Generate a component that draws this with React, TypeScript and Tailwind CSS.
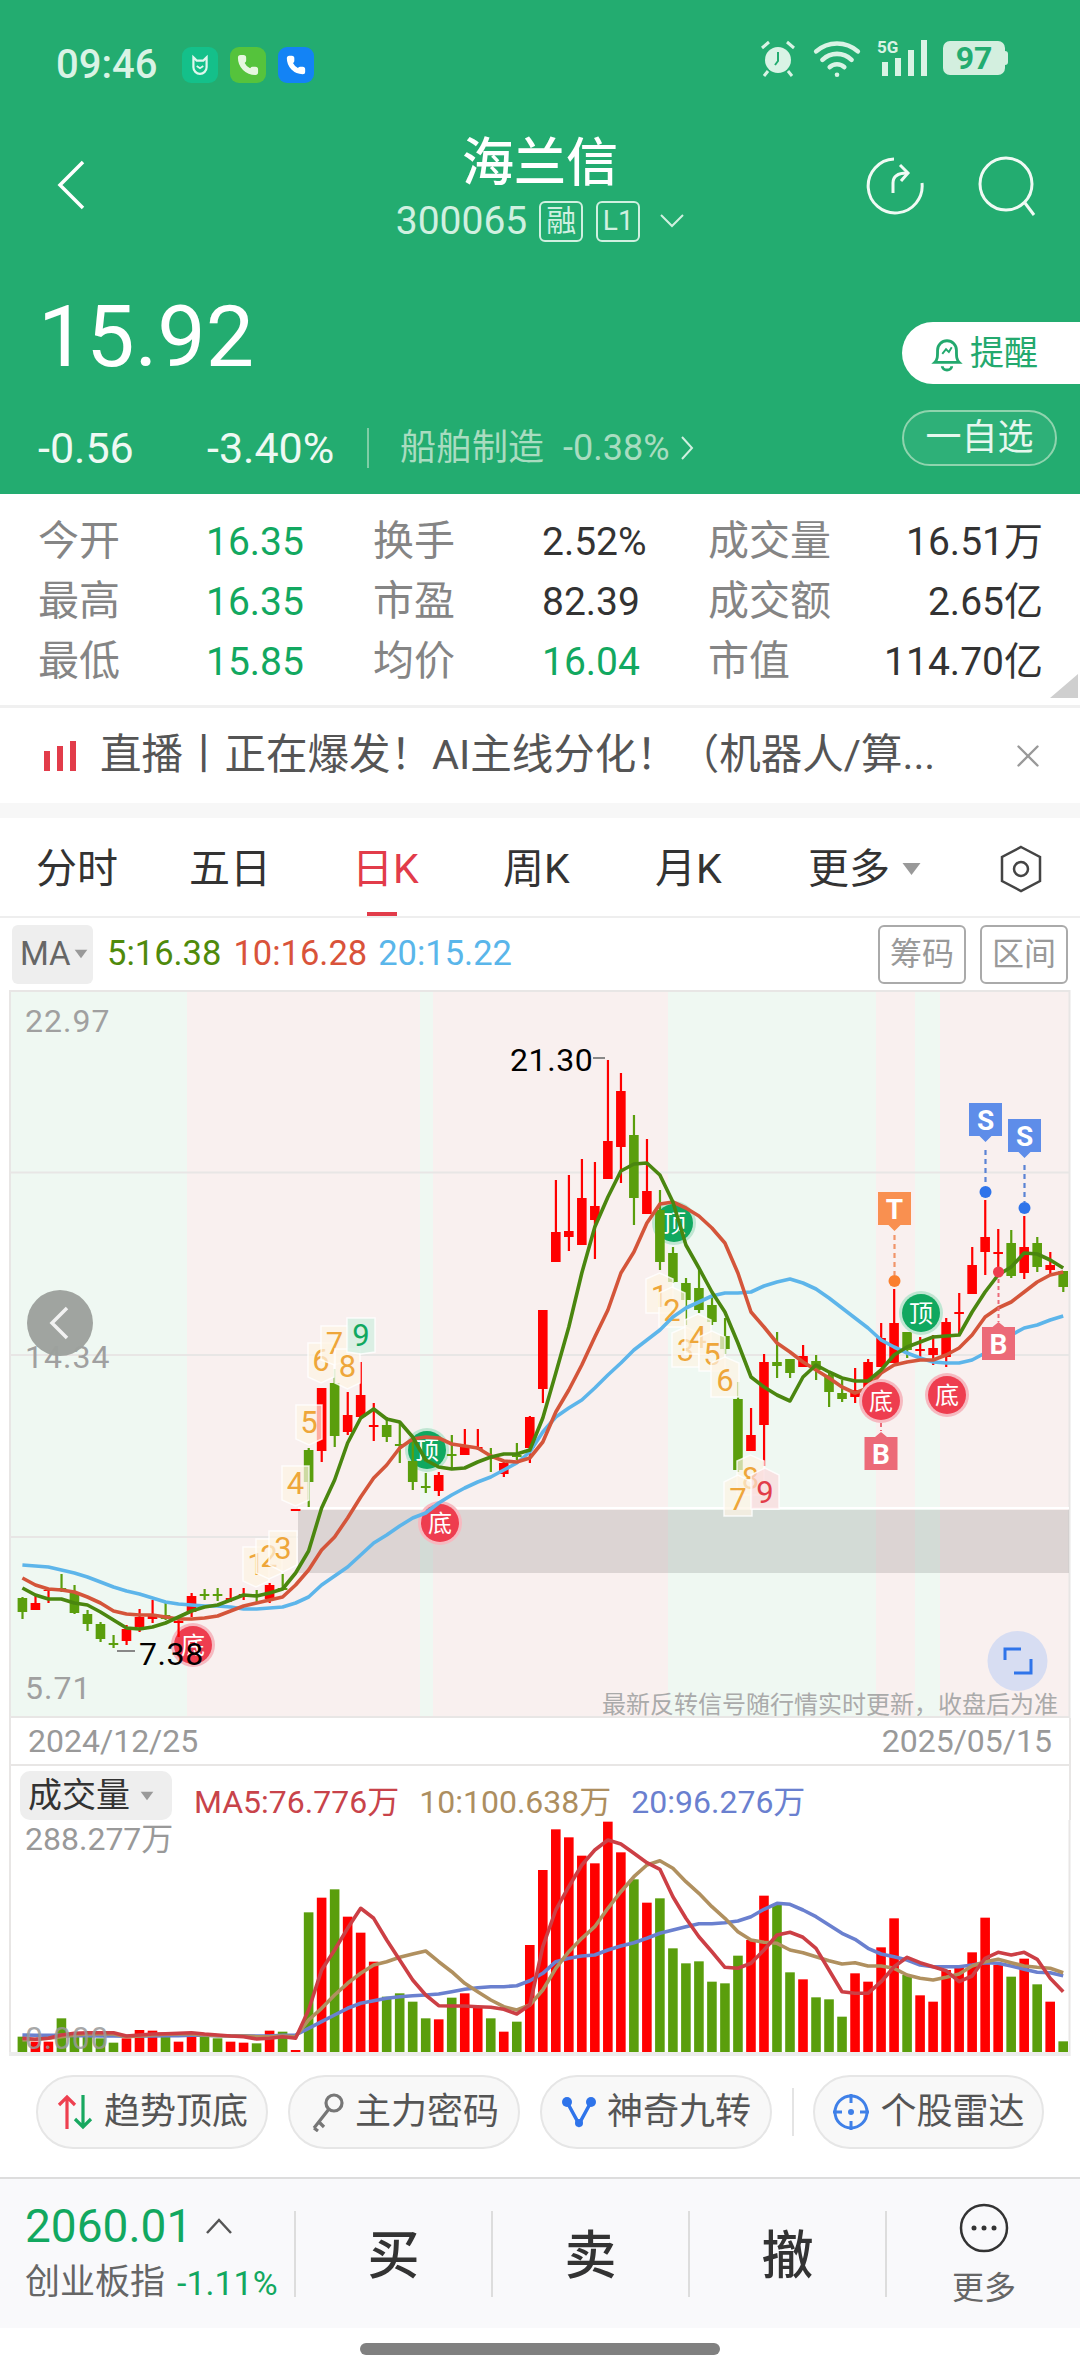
import React from 'react';
import { Phone, Wifi, X } from 'lucide-react';

const FONT = 'font-["Roboto","Noto_Sans_CJK_SC",sans-serif]';

// bar position shared by price and volume charts
const barX = (i: number) => 22.4 + 13.01 * i;

type Candle = [number, number, number, number, 'r' | 'g'];

const candles: Candle[] = [
  [1598, 1612, 1597, 1619, 'g'], [1603, 1610, 1595, 1610, 'r'], [1590, 1591, 1590, 1603, 'r'], [1588, 1590, 1574, 1592, 'g'],
  [1593, 1613, 1585, 1614, 'g'], [1614, 1624, 1610, 1631, 'g'], [1624, 1639, 1622, 1642, 'g'], [1643, 1645, 1635, 1648, 'g'],
  [1629, 1641, 1625, 1645, 'r'], [1617, 1627, 1609, 1632, 'r'], [1614, 1619, 1600, 1623, 'r'], [1615, 1619, 1603, 1620, 'g'],
  [1621, 1623, 1617, 1637, 'r'], [1596, 1612, 1593, 1617, 'r'], [1594, 1596, 1589, 1600, 'g'], [1594, 1596, 1588, 1601, 'g'],
  [1598, 1600, 1588, 1602, 'r'], [1594, 1596, 1588, 1600, 'r'], [1594, 1596, 1590, 1602, 'g'], [1585, 1599, 1583, 1603, 'r'],
  [1588, 1590, 1574, 1590, 'g'], [1509, 1511, 1509, 1511, 'r'], [1450, 1482, 1448, 1507, 'g'], [1388, 1451, 1388, 1462, 'r'],
  [1383, 1436, 1369, 1447, 'g'], [1415, 1432, 1392, 1435, 'r'], [1395, 1417, 1362, 1418, 'r'], [1425, 1427, 1403, 1441, 'r'],
  [1425, 1437, 1417, 1442, 'g'], [1444, 1446, 1422, 1463, 'g'], [1461, 1482, 1440, 1490, 'g'], [1486, 1488, 1473, 1493, 'g'],
  [1475, 1491, 1472, 1496, 'r'], [1454, 1456, 1435, 1468, 'g'], [1445, 1455, 1429, 1455, 'r'], [1447, 1449, 1429, 1450, 'r'],
  [1457, 1459, 1448, 1472, 'g'], [1463, 1474, 1462, 1477, 'r'], [1455, 1457, 1443, 1460, 'g'], [1417, 1448, 1416, 1463, 'r'],
  [1310, 1389, 1310, 1403, 'r'], [1232, 1262, 1180, 1262, 'r'], [1231, 1237, 1175, 1251, 'r'], [1198, 1245, 1159, 1245, 'r'],
  [1206, 1220, 1162, 1259, 'r'], [1141, 1179, 1060, 1179, 'r'], [1091, 1147, 1073, 1183, 'r'], [1135, 1198, 1115, 1225, 'g'],
  [1191, 1214, 1139, 1214, 'r'], [1210, 1262, 1190, 1270, 'g'], [1253, 1282, 1247, 1283, 'g'], [1283, 1300, 1278, 1325, 'g'],
  [1288, 1310, 1270, 1313, 'g'], [1305, 1322, 1297, 1325, 'g'], [1336, 1349, 1318, 1354, 'g'], [1399, 1470, 1382, 1472, 'g'],
  [1435, 1451, 1408, 1451, 'r'], [1362, 1425, 1354, 1466, 'r'], [1362, 1366, 1332, 1378, 'g'], [1359, 1373, 1359, 1378, 'g'],
  [1356, 1367, 1345, 1367, 'r'], [1361, 1370, 1355, 1380, 'g'], [1375, 1392, 1373, 1407, 'g'], [1393, 1399, 1380, 1402, 'g'],
  [1390, 1397, 1368, 1403, 'r'], [1362, 1395, 1359, 1395, 'r'], [1338, 1367, 1323, 1367, 'r'], [1323, 1363, 1289, 1363, 'r'],
  [1332, 1350, 1332, 1358, 'g'], [1349, 1351, 1337, 1357, 'r'], [1348, 1355, 1335, 1365, 'r'], [1322, 1357, 1318, 1367, 'r'],
  [1312, 1314, 1293, 1335, 'r'], [1265, 1294, 1247, 1294, 'r'], [1237, 1252, 1200, 1275, 'r'], [1252, 1254, 1229, 1272, 'r'],
  [1243, 1276, 1230, 1278, 'g'], [1247, 1273, 1216, 1279, 'r'], [1243, 1267, 1237, 1272, 'g'], [1265, 1270, 1252, 1275, 'r'],
  [1271, 1287, 1271, 1292, 'g'],
];

const ma5 = [1588, 1595, 1599, 1599, 1603, 1605, 1612, 1620, 1628, 1629, 1627, 1623, 1617, 1611, 1607, 1605, 1600, 1595, 1596, 1593, 1589, 1573, 1551, 1508, 1480, 1443, 1418, 1409, 1419, 1422, 1437, 1460, 1467, 1469, 1468, 1462, 1457, 1454, 1454, 1450, 1418, 1373, 1327, 1273, 1227, 1197, 1171, 1164, 1163, 1175, 1202, 1245, 1268, 1292, 1312, 1343, 1377, 1387, 1395, 1401, 1377, 1365, 1372, 1378, 1381, 1381, 1370, 1355, 1347, 1342, 1337, 1336, 1335, 1312, 1292, 1275, 1267, 1253, 1254, 1260, 1268];
const ma10 = [1578, 1585, 1589, 1590, 1592, 1597, 1603, 1611, 1614, 1615, 1615, 1617, 1619, 1619, 1618, 1616, 1611, 1606, 1603, 1600, 1597, 1585, 1570, 1550, 1537, 1518, 1497, 1478, 1465, 1448, 1439, 1437, 1438, 1444, 1446, 1448, 1456, 1461, 1462, 1458, 1442, 1412, 1390, 1365, 1337, 1310, 1273, 1252, 1223, 1204, 1202, 1208, 1216, 1228, 1243, 1273, 1312, 1327, 1343, 1352, 1362, 1370, 1378, 1387, 1393, 1388, 1373, 1365, 1362, 1360, 1360, 1355, 1348, 1335, 1317, 1308, 1302, 1292, 1282, 1275, 1272];
const ma20 = [1565, 1566, 1567, 1570, 1573, 1577, 1582, 1587, 1591, 1594, 1598, 1602, 1604, 1605, 1606, 1606, 1607, 1609, 1609, 1608, 1607, 1603, 1597, 1585, 1576, 1567, 1555, 1543, 1535, 1526, 1518, 1513, 1503, 1495, 1488, 1482, 1477, 1470, 1463, 1452, 1432, 1417, 1408, 1400, 1388, 1375, 1363, 1350, 1340, 1330, 1317, 1308, 1302, 1296, 1293, 1293, 1292, 1286, 1282, 1279, 1283, 1289, 1298, 1308, 1318, 1328, 1340, 1347, 1353, 1358, 1362, 1363, 1363, 1360, 1353, 1345, 1335, 1328, 1325, 1320, 1316];

// volume values are offsets below y=1720, in thirds of a pixel
const volTops = [950, 965, 965, 895, 945, 945, 955, 968, 955, 930, 932, 950, 965, 950, 950, 955, 965, 968, 970, 932, 935, 990, 577, 533, 508, 590, 638, 725, 830, 820, 845, 895, 898, 833, 820, 860, 895, 935, 905, 675, 450, 328, 352, 407, 430, 305, 397, 478, 548, 535, 685, 730, 724, 785, 790, 707, 660, 527, 555, 757, 778, 832, 838, 890, 760, 785, 682, 595, 765, 826, 845, 750, 735, 697, 593, 735, 770, 716, 793, 845, 964];
const volGreen = [0, 3, 4, 5, 6, 7, 11, 14, 15, 18, 20, 22, 24, 28, 29, 30, 31, 33, 36, 38, 47, 49, 50, 51, 52, 53, 54, 55, 58, 59, 61, 62, 63, 68, 76, 78, 80];
const volMa5 = [955, 958, 955, 945, 940, 938, 938, 938, 948, 945, 942, 941, 940, 938, 942, 945, 948, 950, 957, 955, 950, 955, 870, 750, 690, 625, 565, 595, 660, 720, 780, 825, 857, 858, 858, 860, 862, 868, 882, 855, 680, 570, 500, 435, 390, 360, 372, 400, 428, 448, 530, 595, 650, 695, 742, 745, 730, 690, 645, 637, 652, 685, 750, 815, 820, 820, 785, 740, 712, 728, 740, 752, 785, 768, 715, 697, 705, 697, 718, 775, 815];
const volMa10 = [960, 958, 955, 950, 945, 942, 942, 942, 950, 948, 945, 943, 942, 942, 945, 947, 948, 948, 950, 950, 948, 950, 900, 865, 825, 790, 760, 735, 725, 712, 702, 693, 725, 755, 790, 815, 840, 860, 870, 855, 810, 745, 695, 655, 620, 565, 515, 470, 435, 422, 445, 485, 520, 560, 595, 635, 660, 667, 670, 690, 698, 710, 722, 732, 728, 738, 738, 745, 765, 775, 780, 772, 762, 738, 725, 718, 728, 738, 742, 745, 758];
const volMa20 = [945, 946, 946, 946, 947, 947, 948, 948, 949, 948, 948, 947, 947, 946, 946, 947, 947, 947, 948, 948, 946, 945, 925, 905, 885, 865, 850, 842, 835, 830, 827, 825, 822, 815, 808, 803, 800, 800, 797, 782, 760, 725, 715, 708, 705, 690, 678, 668, 655, 640, 630, 620, 611, 611, 608, 603, 590, 568, 550, 553, 570, 590, 615, 640, 658, 685, 702, 710, 720, 735, 740, 740, 740, 735, 728, 730, 738, 748, 757, 758, 767];

const volY = (v: number) => 1720 + v / 3;
const pts = (ys: number[], f: (v: number) => number = (v) => v) => ys.map((y, i) => `${barX(i).toFixed(1)},${f(y).toFixed(1)}`).join(' ');

const zones: [number, number, string][] = [
  [10, 187, '#eff8f2'], [187, 420, '#f9f0ef'], [420, 433, '#eff8f2'], [433, 668, '#f9f0ef'], [668, 876, '#eff8f2'],
  [876, 915, '#f9f0ef'], [915, 940, '#eff8f2'], [940, 1069, '#f9f0ef'],
];

// nine-turn count labels: x, y, width, pointer y, digit, colour set
const tdLabels: [number, number, number, number, string, 'o' | 'g' | 'r'][] = [
  [243, 1547, 26, 1587, '1', 'o'], [256, 1539, 26, 1579, '2', 'o'], [269, 1531, 28, 1572, '3', 'o'],
  [282, 1466, 27, 1506, '4', 'o'], [296, 1405, 26, 1445, '5', 'o'], [308, 1343, 26, 1383, '6', 'o'],
  [321, 1326, 27, 1365, '7', 'o'], [335, 1349, 25, 1389, '8', 'o'], [347, 1318, 28, 1354, '9', 'g'],
  [646, 1279, 27, 1273, '1', 'o'], [659, 1293, 26, 1287, '2', 'o'], [672, 1333, 27, 1327, '3', 'o'],
  [685, 1320, 26, 1314, '4', 'o'], [699, 1337, 26, 1331, '5', 'o'], [711, 1363, 28, 1357, '6', 'o'],
  [737, 1461, 27, 1455, '8', 'o'], [724, 1482, 28, 1475, '7', 'o'], [751, 1475, 28, 1468, '9', 'r'],
];

const TdLabel = ({ x, y, w, tip, n, c }: { x: number; y: number; w: number; tip: number; n: string; c: 'o' | 'g' | 'r' }) => {
  const h = 34;
  const mid = x + w / 2;
  const fill = c === 'g' ? '#cfeee0' : c === 'r' ? '#fbd9dc' : '#fdf3e4';
  const ink = c === 'g' ? '#10a860' : c === 'r' ? '#e23c4a' : '#eea63a';
  const d = tip < y
    ? `M${x} ${y}L${mid} ${tip}L${x + w} ${y}V${y + h}H${x}Z`
    : `M${x} ${y}H${x + w}V${y + h}L${mid} ${tip}L${x} ${y + h}Z`;
  return (
    <g>
      <path d={d} fill={fill} fillOpacity="0.7" stroke="#fff" strokeOpacity="0.8" strokeWidth="1.5" />
      <text x={mid} y={y + 28} textAnchor="middle" fontSize="31" fill={ink}>{n}</text>
    </g>
  );
};

const Badge = ({ x, y, t, tone }: { x: number; y: number; t: string; tone: 'r' | 'g' }) => (
  <g>
    <circle cx={x} cy={y} r="22" fill={tone === 'r' ? '#f6b9c0' : '#bfe6d2'} />
    <circle cx={x} cy={y} r="19" fill={tone === 'r' ? '#ee3d4f' : '#10a860'} />
    <text x={x} y={y + 9} textAnchor="middle" fontSize="24" fill="#fff">{t}</text>
  </g>
);

const Flag = ({ x, y, t, fill, up }: { x: number; y: number; t: string; fill: string; up?: boolean }) => (
  <g>
    <path d={up ? `M${x - 16.5} ${y}L${x - 6} ${y}L${x} ${y - 5}L${x + 6} ${y}H${x + 16.5}V${y + 33}H${x - 16.5}Z` : `M${x - 16.5} ${y}H${x + 16.5}V${y + 33}H${x + 6}L${x} ${y + 39}L${x - 6} ${y + 33}H${x - 16.5}Z`} fill={fill} />
    <text x={x} y={y + 27} textAnchor="middle" fontSize="28" fontWeight="700" fill="#fff">{t}</text>
  </g>
);

const Caret = ({ className }: { className: string }) => (
  <svg viewBox="0 0 20 14" className={className}><path d="M1 1h18l-9 12z" fill="currentColor" /></svg>
);

const PriceChart = () => (
  <svg viewBox="0 990 1080 728" className="block h-[728px] w-[1080px]" fontFamily="Roboto, 'Noto Sans CJK SC', sans-serif">
    <rect x="0" y="990" width="1080" height="728" fill="#fff" />
    {zones.map(([a, b, f]) => <rect key={a} x={a} y="990" width={b - a} height="728" fill={f} />)}
    <path d="M10 991H1070M10 1172.5H1070M10 1355H1070M10 1537H298M10 1717H1070M10 990V1718M1069.5 990V1718" stroke="#e8e6e5" strokeWidth="2" fill="none" />
    <rect x="298" y="1510" width="771" height="63" fill="#000" fillOpacity="0.115" />
    <path d="M298 1508H1069" stroke="#fff" strokeWidth="2" />

    <Badge x={193} y={1645} t="底" tone="r" />
    <Badge x={427} y={1450} t="顶" tone="g" />
    <Badge x={674} y={1223} t="顶" tone="g" />
    <Badge x={440} y={1523} t="底" tone="r" />

    {candles.map(([top, bot, hi, lo, c], i) => {
      const col = c === 'r' ? '#ff0000' : '#5a9e0c';
      const x = barX(i);
      return (
        <g key={i}>
          <rect x={x - 1} y={hi} width="2.2" height={lo - hi} fill={col} />
          <rect x={x - 4.8} y={top} width="9.6" height={bot - top} fill={col} />
        </g>
      );
    })}

    {tdLabels.map(([x, y, w, tip, n, c]) => <TdLabel key={`${x}-${n}`} x={x} y={y} w={w} tip={tip} n={n} c={c} />)}

    <polyline points={pts(ma20)} fill="none" stroke="#5db5ea" strokeWidth="3.6" strokeLinejoin="round" />
    <polyline points={pts(ma10)} fill="none" stroke="#d4553a" strokeWidth="3.6" strokeLinejoin="round" />
    <polyline points={pts(ma5)} fill="none" stroke="#4a860f" strokeWidth="3.6" strokeLinejoin="round" />

    <Badge x={921} y={1313} t="顶" tone="g" />
    <Badge x={881} y={1401} t="底" tone="r" />
    <Badge x={947} y={1395} t="底" tone="r" />

    <path d="M881 1423V1431" stroke="#ec6a78" strokeWidth="2" strokeDasharray="4 3" />
    <Flag x={881} y={1437} t="B" fill="#ec6a78" up />
    <path d="M998.5 1272V1322" stroke="#ec6a78" strokeWidth="2" strokeDasharray="4 3" />
    <circle cx="998.5" cy="1272" r="5.5" fill="#ee3d4f" />
    <Flag x={998.5} y={1327} t="B" fill="#ec6a78" up />

    <path d="M894.5 1235V1275" stroke="#f0956a" strokeWidth="2.2" strokeDasharray="5 4" />
    <circle cx="894.5" cy="1281" r="6" fill="#fa7f2e" />
    <Flag x={894.5} y={1192} t="T" fill="#f99050" />
    <path d="M985.5 1150V1186" stroke="#5a83d4" strokeWidth="2.2" strokeDasharray="5 4" />
    <circle cx="985.5" cy="1192" r="6" fill="#2f74ea" />
    <Flag x={985.5} y={1103} t="S" fill="#5e8de9" />
    <path d="M1024.5 1165V1202" stroke="#5a83d4" strokeWidth="2.2" strokeDasharray="5 4" />
    <circle cx="1024.5" cy="1208" r="6" fill="#2f74ea" />
    <Flag x={1024.5} y={1119} t="S" fill="#5e8de9" />

    <text x="25" y="1032" fontSize="32" fill="#a0a0a0" letterSpacing="1">22.97</text>
    <text x="25" y="1368" fontSize="32" fill="#a0a0a0" letterSpacing="1">14.34</text>
    <text x="25" y="1699" fontSize="32" fill="#a0a0a0" letterSpacing="1">5.71</text>

    <text x="510" y="1071" fontSize="32" fill="#000" letterSpacing="0.6">21.30</text>
    <path d="M593 1058H605" stroke="#888" strokeWidth="2" />
    <text x="139" y="1665" fontSize="32" fill="#000" letterSpacing="0.6">7.38</text>
    <path d="M117 1651H135" stroke="#888" strokeWidth="2" />

    <circle cx="60" cy="1323" r="33" fill="#9da19d" fillOpacity="0.97" />
    <path d="M67 1308L52 1323L67 1338" fill="none" stroke="#f2f2f2" strokeWidth="3.5" />

    <circle cx="1017.5" cy="1661" r="30" fill="#d7ddf2" />
    <path d="M1005 1660V1649H1021M1031 1659V1673H1014" fill="none" stroke="#2f74ea" strokeWidth="3" />

    <text x="1058" y="1713" textAnchor="end" fontSize="24" fill="#aaa">最新反转信号随行情实时更新，收盘后为准</text>
  </svg>
);

const VolumeChart = () => (
  <svg viewBox="0 1820 1080 236" className="block h-[236px] w-[1080px]" fontFamily="Roboto, 'Noto Sans CJK SC', sans-serif">
    <path d="M10 1820V2056M1069.5 1820V2056" stroke="#e8e6e5" strokeWidth="2" />
    <rect x="9" y="2052" width="1061" height="4" fill="#ececec" />
    {volTops.map((v, i) => (
      <rect key={i} x={barX(i) - 4.8} y={volY(v)} width="9.6" height={2052 - volY(v)} fill={volGreen.includes(i) ? '#5a9e0c' : '#ff0000'} />
    ))}
    <polyline points={pts(volMa20, volY)} fill="none" stroke="#6a80cf" strokeWidth="3.6" strokeLinejoin="round" />
    <polyline points={pts(volMa10, volY)} fill="none" stroke="#b0905f" strokeWidth="3.6" strokeLinejoin="round" />
    <polyline points={pts(volMa5, volY)} fill="none" stroke="#cc3f45" strokeWidth="3.6" strokeLinejoin="round" />
    <text x="25" y="1850" fontSize="32" fill="#999">288.277万</text>
    <text x="25" y="2049" fontSize="32" fill="#999" fillOpacity="0.85" letterSpacing="0.8">0.000</text>
  </svg>
);

const stats = [
  ['今开', '16.35', 'g', '换手', '2.52%', 'd', '成交量', '16.51万'],
  ['最高', '16.35', 'g', '市盈', '82.39', 'd', '成交额', '2.65亿'],
  ['最低', '15.85', 'g', '均价', '16.04', 'g', '市值', '114.70亿'],
];

const tabs = [
  { t: '分时', w: 'w-[153px]' },
  { t: '五日', w: 'w-[163px]' },
  { t: '日K', w: 'w-[151px]', active: true },
  { t: '周K', w: 'w-[152px]' },
  { t: '月K', w: 'w-[153px]' },
];

const Pill = ({ w, icon, label }: { w: string; icon: React.ReactNode; label: string }) => (
  <div className={`flex h-[74px] ${w} items-center justify-center gap-[10px] rounded-full border-2 border-[#e6e6e6] bg-[#f8f8f8] text-[36px] text-[#555]`}>
    {icon}
    <span>{label}</span>
  </div>
);

const App: React.FC = () => {
  return (
    <div className={`${FONT} flex h-[2376px] w-[1080px] flex-col overflow-hidden bg-white`}>
      {/* Green quote header */}
      <header className="h-[494px] shrink-0 bg-[#23ac70]">
        <div className="flex h-[83px] items-end justify-between pl-[56px] pr-[72px]">
          <div className="flex items-center">
            <span className="w-[126px] text-[40px] font-medium leading-[36px] text-[#d9f3e5]">09:46</span>
            <div className="flex gap-[12px]">
              <div className="flex h-[36px] w-[36px] items-center justify-center rounded-[9px] bg-[#14c08a]">
                <svg viewBox="0 0 20 20" className="h-[22px] w-[22px]"><path d="M4 3l3 3h6l3-3v9a6 6 0 0 1-12 0z" fill="none" stroke="#dff7ee" strokeWidth="2" /><path d="M7 11l3 2 3-2" fill="none" stroke="#dff7ee" strokeWidth="1.6" /></svg>
              </div>
              <div className="flex h-[36px] w-[36px] items-center justify-center rounded-[9px] bg-[#55c33c]">
                <Phone size={22} fill="#e6f7df" stroke="#e6f7df" />
              </div>
              <div className="flex h-[36px] w-[36px] items-center justify-center rounded-[9px] bg-[#1383f5]">
                <Phone size={20} fill="#fff" stroke="#fff" />
              </div>
            </div>
          </div>
          <div className="flex items-center">
            <svg viewBox="0 0 38 38" className="h-[38px] w-[38px]">
              <circle cx="19" cy="21" r="13" fill="#d9f3e5" />
              <path d="M19 13v9l-3 4" fill="none" stroke="#23ac70" strokeWidth="2" />
              <path d="M3 9l7-6M35 9l-7-6M9 32l-4 5M29 32l4 5" stroke="#d9f3e5" strokeWidth="3" />
            </svg>
            <Wifi size={50} stroke="#d9f3e5" strokeWidth={2.2} className="ml-[15px]" />
            <div className="relative ml-[15px] flex h-[36px] w-[50px] items-end justify-end gap-[7px]">
              <span className="absolute -top-[1px] left-0 text-[17px] font-bold leading-[17px] text-[#d9f3e5]">5G</span>
              <span className="h-[14px] w-[6px] bg-[#d9f3e5]" />
              <span className="h-[18px] w-[6px] bg-[#d9f3e5]" />
              <span className="h-[26px] w-[6px] bg-[#d9f3e5]" />
              <span className="h-[36px] w-[6px] bg-[#d9f3e5]" />
            </div>
            <div className="ml-[16px] flex h-[34px] w-[62px] items-center justify-center rounded-[7px] bg-[#d3efdf] text-[32px] font-bold leading-[34px] text-[#23ac70]">97</div>
            <span className="h-[14px] w-[3px] rounded-r bg-[#d3efdf]" />
          </div>
        </div>

        <div className="mt-[46px] grid h-[116px] grid-cols-[1fr_auto_1fr]">
          <div className="flex items-center pb-[4px] pl-[56px]">
            <svg viewBox="0 0 30 50" className="h-[50px] w-[30px]"><path d="M27 2L4 25l23 23" fill="none" stroke="#fff" strokeWidth="3.5" /></svg>
          </div>
          <div className="flex flex-col items-center pt-[4px]">
            <div className="text-[52px] font-medium leading-[62px] text-white">海兰信</div>
            <div className="mt-[5px] flex items-center text-[#d0f0e0]">
              <span className="text-[39px] leading-[42px]">300065</span>
              <span className="ml-[12px] flex h-[41px] w-[44px] items-center justify-center rounded-[6px] border-2 border-[#d0f0e0] text-[30px] leading-none">融</span>
              <span className="ml-[13px] flex h-[41px] w-[44px] items-center justify-center rounded-[6px] border-2 border-[#d0f0e0] text-[28px] leading-none">L1</span>
              <svg viewBox="0 0 24 14" className="ml-[20px] h-[14px] w-[24px]"><path d="M1 1l11 11L23 1" fill="none" stroke="#d0f0e0" strokeWidth="2" /></svg>
            </div>
          </div>
          <div className="flex items-center justify-end gap-[52px] pb-[2px] pr-[42px]">
            <svg viewBox="0 0 60 60" className="h-[60px] w-[60px]" fill="none" stroke="#f0faf4" strokeWidth="3">
              <path d="M28 3A27 27 0 1 0 56 27" />
              <path d="M27 37V27Q27 17 41 17" />
              <path d="M34 9l8 8-7 8" />
            </svg>
            <svg viewBox="0 0 60 60" className="h-[60px] w-[60px]" fill="none" stroke="#f0faf4" strokeWidth="3">
              <circle cx="28" cy="28" r="26" />
              <path d="M47 47l9 12" />
            </svg>
          </div>
        </div>

        <div className="mt-[47px] flex justify-between pl-[38px]">
          <div>
            <div className="text-[86px] leading-[90px] text-white">15.92</div>
            <div className="mt-[42px] flex h-[48px] items-center">
              <span className="w-[169px] text-[43px] text-[#eef9f3]">-0.56</span>
              <span className="w-[160px] text-[43px] text-[#eef9f3]">-3.40%</span>
              <span className="h-[40px] w-[2px] bg-[#7fcda6]" />
              <span className="ml-[31px] text-[36px] text-[#a9dcc0]">船舶制造</span>
              <span className="ml-[19px] text-[36px] text-[#a9dcc0]">-0.38%</span>
              <svg viewBox="0 0 14 26" className="ml-[10px] h-[26px] w-[14px]"><path d="M2 2l10 11L2 24" fill="none" stroke="#d0f0e0" strokeWidth="2" /></svg>
            </div>
          </div>
          <div className="w-[178px] pt-[30px]">
            <div className="flex h-[62px] items-center gap-[6px] rounded-l-[31px] bg-white pl-[28px] text-[34px] text-[#23a96e]">
              <svg viewBox="0 0 36 40" className="h-[38px] w-[34px]" fill="none" stroke="#23a96e" strokeWidth="3">
                <path d="M5 30c3-3 3-6 3-13a10 10 0 0 1 20 0c0 7 0 10 3 13z" />
                <path d="M13 34a5 4 0 0 0 10 0" />
                <path d="M13 21l4-5 3 3 3-5" strokeWidth="2" />
              </svg>
              <span>提醒</span>
            </div>
            <div className="mt-[26px] flex h-[56px] w-[155px] items-center justify-center rounded-[28px] border-2 border-[#8fd4ae] bg-[#2eb078] text-[36px] text-[#e6f7ee]">
              一自选
            </div>
          </div>
        </div>
      </header>

      {/* Quote stats */}
      <section className="relative h-[211px] shrink-0 pl-[38px] pt-[18px]">
        {stats.map((r) => (
          <div key={r[0]} className="flex h-[60px] items-center text-[39px]">
            <span className="w-[168px] text-[41px] text-[#858585]">{r[0]}</span>
            <span className={`w-[167px] ${r[2] === 'g' ? 'text-[#12a860]' : ''}`}>{r[1]}</span>
            <span className="w-[169px] text-[41px] text-[#858585]">{r[3]}</span>
            <span className={`w-[166px] ${r[5] === 'g' ? 'text-[#12a860]' : 'text-[#333]'}`}>{r[4]}</span>
            <span className="w-[160px] text-[41px] text-[#858585]">{r[6]}</span>
            <span className="w-[175px] whitespace-nowrap text-right text-[#333]">{r[7]}</span>
          </div>
        ))}
        <svg viewBox="0 0 28 24" className="absolute bottom-[7px] right-[2px] h-[24px] w-[28px]"><path d="M28 0v24H0z" fill="#cfcfcf" /></svg>
      </section>
      <div className="h-[3px] shrink-0 bg-[#f0f0f0]" />

      {/* Live banner */}
      <section className="flex h-[95px] shrink-0 items-center pl-[44px]">
        <div className="flex h-[30px] w-[32px] items-end justify-between">
          <span className="h-[20px] w-[6px] bg-[#e23c4a]" />
          <span className="h-[25px] w-[6px] bg-[#e23c4a]" />
          <span className="h-[30px] w-[6px] bg-[#e23c4a]" />
        </div>
        <span className="ml-[24px] w-[835px] whitespace-nowrap text-[41.5px] text-[#555]">直播丨正在爆发！AI主线分化！（机器人/算...</span>
        <X size={38} strokeWidth={1.5} className="ml-[74px] text-[#999]" />
      </section>
      <div className="h-[15px] shrink-0 bg-[#f7f7f7]" />

      {/* Period tabs */}
      <nav className="flex h-[100px] shrink-0 items-center border-b-2 border-[#eeeeee] pl-[36px] text-[41px] text-[#333]">
        {tabs.map((tab) => (
          <div key={tab.t} className={`relative flex h-full ${tab.w} items-center pt-[6px] ${tab.active ? 'text-[#e23c4a]' : ''}`}>
            {tab.t}
            {tab.active && <span className="absolute bottom-[0px] left-[15px] h-[4px] w-[30px] bg-[#e23c4a]" />}
          </div>
        ))}
        <span className="pt-[6px]">更多</span>
        <Caret className="ml-[11px] mt-[4px] h-[14px] w-[21px] text-[#999]" />
        <svg viewBox="0 0 44 48" className="ml-[77px] mt-[4px] h-[48px] w-[44px]" fill="none" stroke="#444" strokeWidth="2.5">
          <path d="M22 2l19 10v24L22 46 3 36V12z" />
          <circle cx="22" cy="24" r="7" />
        </svg>
      </nav>

      {/* Indicator values */}
      <div className="flex h-[72px] shrink-0 items-center pl-[12px] pr-[12px]">
        <div className="flex h-[59px] w-[81px] items-center rounded-[6px] bg-[#eeeeee] pl-[8px] text-[33px] text-[#666]">
          MA
          <Caret className="ml-[3px] h-[10px] w-[14px] text-[#999]" />
        </div>
        <span className="ml-[14px] text-[34.5px] text-[#4f8a0b]">5:16.38</span>
        <span className="ml-[12px] text-[34.5px] text-[#d9533a]">10:16.28</span>
        <span className="ml-[11px] text-[34.5px] text-[#5ab6ea]">20:15.22</span>
        <div className="ml-auto flex gap-[14px]">
          <span className="flex h-[59px] w-[88px] items-center justify-center rounded-[6px] border-2 border-[#aaaaaa] text-[32px] text-[#999]">筹码</span>
          <span className="flex h-[59px] w-[88px] items-center justify-center rounded-[6px] border-2 border-[#aaaaaa] text-[32px] text-[#999]">区间</span>
        </div>
      </div>

      <PriceChart />

      <div className="mx-[9px] flex h-[48px] shrink-0 items-center justify-between border-x-2 border-b-2 border-x-[#e8e6e5] border-b-[#e8e6e5] px-[17px] text-[32px] text-[#999]">
        <span>2024/12/25</span>
        <span>2025/05/15</span>
      </div>

      {/* Volume */}
      <div className="mx-[9px] flex h-[54px] shrink-0 items-start border-x-2 border-[#e8e6e5] pl-[9px] pt-[5px] text-[32px]">
        <div className="flex h-[49px] w-[152px] items-center rounded-[10px] bg-[#eeeeee] pl-[8px] text-[34px] text-[#333]">
          成交量
          <Caret className="ml-[10px] h-[10px] w-[14px] text-[#999]" />
        </div>
        <span className="ml-[22px] mt-[7px] text-[#c8434a]">MA5:76.776万</span>
        <span className="ml-[20px] mt-[7px] text-[#ad8e5f]">10:100.638万</span>
        <span className="ml-[20px] mt-[7px] text-[#6a80cf]">20:96.276万</span>
      </div>
      <VolumeChart />

      {/* Indicator shortcuts */}
      <div className="flex h-[121px] shrink-0 items-start pl-[36px] pt-[19px]">
        <Pill
          w="w-[232px]"
          label="趋势顶底"
          icon={
            <svg viewBox="0 0 38 38" className="h-[38px] w-[38px]" fill="none" strokeWidth="3.2">
              <path d="M11 36V4M3 12l8-8 8 8" stroke="#ee4050" />
              <path d="M27 2v32M19 26l8 8 8-8" stroke="#18a860" />
            </svg>
          }
        />
        <div className="ml-[20px]">
          <Pill
            w="w-[232px]"
            label="主力密码"
            icon={
              <svg viewBox="0 0 36 40" className="h-[40px] w-[36px]" fill="none" stroke="#777" strokeWidth="3.2">
                <circle cx="25" cy="11" r="8" />
                <path d="M20 17L5 36M10 30l5 5M5 36l4 3" />
              </svg>
            }
          />
        </div>
        <div className="ml-[20px]">
          <Pill
            w="w-[232px]"
            label="神奇九转"
            icon={
              <svg viewBox="0 0 36 36" className="h-[36px] w-[36px]">
                <path d="M6 8l12 22L30 8" fill="none" stroke="#2f74ea" strokeWidth="3.5" />
                <circle cx="6" cy="8" r="5" fill="#2f74ea" />
                <circle cx="30" cy="8" r="5" fill="#2f74ea" />
                <circle cx="18" cy="29" r="4" fill="#2f74ea" />
              </svg>
            }
          />
        </div>
        <span className="ml-[20px] mt-[13px] h-[48px] w-[2px] bg-[#e4e4e4]" />
        <div className="ml-[19px]">
          <Pill
            w="w-[231px]"
            label="个股雷达"
            icon={
              <svg viewBox="0 0 38 38" className="h-[38px] w-[38px]" fill="none" stroke="#3f80e8" strokeWidth="3">
                <circle cx="19" cy="19" r="16" />
                <path d="M19 1v9M19 28v9M1 19h9M28 19h9" />
                <circle cx="19" cy="19" r="3" fill="#3f80e8" stroke="none" />
              </svg>
            }
          />
        </div>
      </div>

      {/* Bottom trade bar */}
      <footer className="flex h-[151px] shrink-0 items-start border-t-2 border-[#dddddd] bg-[#f9f9fb]">
        <div className="h-[130px] w-[294px] shrink-0 pl-[25px] pt-[22px]">
          <div className="flex items-center">
            <span className="text-[46px] leading-[50px] text-[#12a860]">2060.01</span>
            <svg viewBox="0 0 26 16" className="ml-[14px] h-[16px] w-[26px]"><path d="M1 15L13 2l12 13" fill="none" stroke="#555" strokeWidth="2.5" /></svg>
          </div>
          <div className="mt-[12px] flex items-center">
            <span className="text-[35px] leading-[40px] text-[#666]">创业板指</span>
            <span className="ml-[12px] text-[34px] leading-[40px] text-[#12a860]">-1.11%</span>
          </div>
        </div>
        {['买', '卖', '撤'].map((c) => (
          <div key={c} className="mt-[32px] flex h-[86px] w-[197px] shrink-0 items-center justify-center border-l-2 border-[#dddddd] pt-[6px] text-[52px] font-medium text-[#333]">{c}</div>
        ))}
        <div className="mt-[32px] h-[86px] w-[2px] shrink-0 bg-[#dddddd]" />
        <div className="flex w-[194px] shrink-0 flex-col items-center pt-[24px]">
          <svg viewBox="0 0 50 50" className="h-[50px] w-[50px]">
            <circle cx="25" cy="25" r="23" fill="none" stroke="#333" strokeWidth="2.5" />
            <circle cx="15" cy="25" r="2.5" fill="#333" /><circle cx="25" cy="25" r="2.5" fill="#333" /><circle cx="35" cy="25" r="2.5" fill="#333" />
          </svg>
          <span className="mt-[17px] text-[32px] leading-[36px] text-[#666]">更多</span>
        </div>
      </footer>

      <div className="flex flex-1 justify-center pt-[15px]">
        <span className="h-[12px] w-[360px] rounded-full bg-[#808080]" />
      </div>
    </div>
  );
};

export default App;
